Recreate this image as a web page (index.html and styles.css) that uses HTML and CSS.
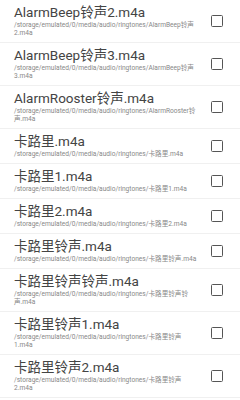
FILE: index.html
```html
<!DOCTYPE html>
<html>
<head>
<meta charset="utf-8">
<link rel="stylesheet" href="styles.css">
</head>
<body>
<ul class="list">
  <li class="row"><div class="info"><div class="title">AlarmBeep铃声2.m4a</div><div class="path">/storage/emulated/0/media/audio/ringtones/AlarmBeep铃声2.m4a</div></div><span class="check"></span></li>
  <li class="row"><div class="info"><div class="title">AlarmBeep铃声3.m4a</div><div class="path">/storage/emulated/0/media/audio/ringtones/AlarmBeep铃声3.m4a</div></div><span class="check"></span></li>
  <li class="row"><div class="info"><div class="title">AlarmRooster铃声.m4a</div><div class="path">/storage/emulated/0/media/audio/ringtones/AlarmRooster铃声.m4a</div></div><span class="check"></span></li>
  <li class="row"><div class="info"><div class="title">卡路里.m4a</div><div class="path">/storage/emulated/0/media/audio/ringtones/卡路里.m4a</div></div><span class="check"></span></li>
  <li class="row"><div class="info"><div class="title">卡路里1.m4a</div><div class="path">/storage/emulated/0/media/audio/ringtones/卡路里1.m4a</div></div><span class="check"></span></li>
  <li class="row"><div class="info"><div class="title">卡路里2.m4a</div><div class="path">/storage/emulated/0/media/audio/ringtones/卡路里2.m4a</div></div><span class="check"></span></li>
  <li class="row"><div class="info"><div class="title">卡路里铃声.m4a</div><div class="path">/storage/emulated/0/media/audio/ringtones/卡路里铃声.m4a</div></div><span class="check"></span></li>
  <li class="row"><div class="info"><div class="title">卡路里铃声铃声.m4a</div><div class="path">/storage/emulated/0/media/audio/ringtones/卡路里铃声铃声.m4a</div></div><span class="check"></span></li>
  <li class="row"><div class="info"><div class="title">卡路里铃声1.m4a</div><div class="path">/storage/emulated/0/media/audio/ringtones/卡路里铃声1.m4a</div></div><span class="check"></span></li>
  <li class="row"><div class="info"><div class="title">卡路里铃声2.m4a</div><div class="path">/storage/emulated/0/media/audio/ringtones/卡路里铃声2.m4a</div></div><span class="check"></span></li>
</ul>
</body>
</html>
```
FILE: styles.css
```css
html, body {
  margin: 0;
  padding: 0;
  background: #ffffff;
  font-family: Roboto, "Noto Sans CJK SC", sans-serif;
}
.list {
  list-style: none;
  margin: 0;
  padding: 0;
}
.row {
  display: flex;
  align-items: center;
  padding: 5px 17px 5px 14px;
  border-bottom: 1px solid #f0f0f0;
}
.info {
  flex: 1;
  min-width: 0;
  padding-right: 14.5px;
}
.title {
  font-size: 13.5px;
  line-height: 15px;
  color: #444444;
  margin-bottom: 1px;
}
.path {
  font-size: 6.6px;
  line-height: 8px;
  color: #888888;
  overflow-wrap: anywhere;
}
.check {
  width: 12px;
  height: 12px;
  box-sizing: border-box;
  border: 1.5px solid #555;
  border-radius: 1.5px;
  flex: none;
}
```
